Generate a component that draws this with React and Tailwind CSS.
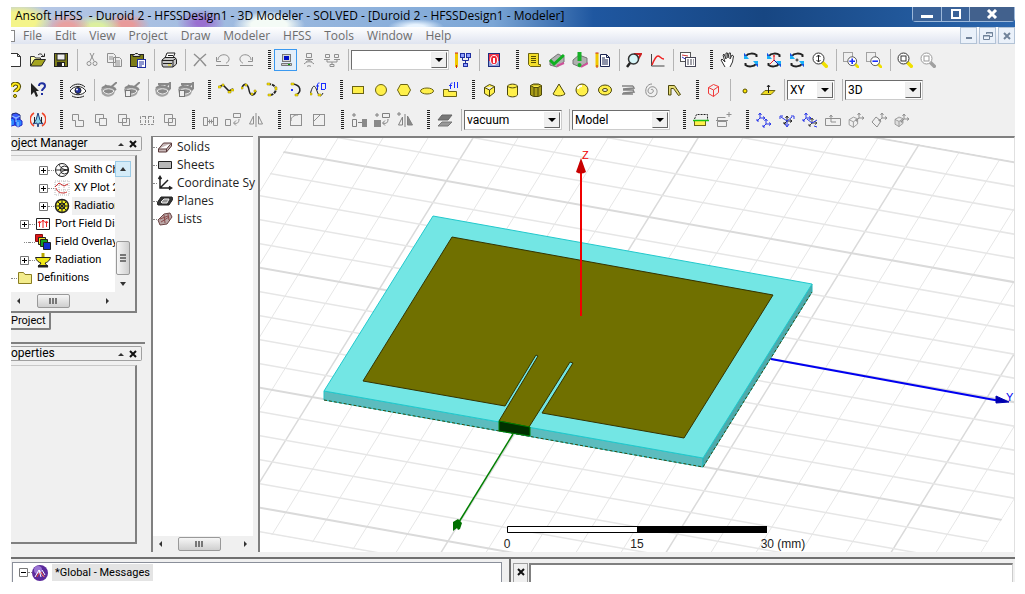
import React, { useState } from "react";

const GREY = "#8f8f8f";
const YELLOW = "#fff04a";
const BLUE = "#1a2fff";

const box = (x, y, w, h, fill, stroke) => (
  <rect x={x} y={y} width={w} height={h} fill={fill || "none"} stroke={stroke} />
);

const magnifier = (inner, stroke = "#333", handle = "#f0e000") => (
  <>
    <path d="M10 10L15.500 15.500" stroke={handle} strokeWidth="3.500" />
    <circle cx="6.500" cy="6.500" r="5.500" stroke={stroke} fill="#fff" />
    {inner}
  </>
);

const rotate = (inner) => (
  <>
    <path d="M3 4C5 1 11 1 13.500 3v2M13 12c-2 3-8 3-10.500 1v-2" stroke="#222" strokeWidth="2" />
    <path d="M1 1v6h5zM15 15V9h-5z" fill="#18b0f8" stroke="none" />
    <path d="M1 1v3h3zM15 15v-3h-3z" fill="#1a4fe0" stroke="none" />
    {inner}
  </>
);

const grayView = (extra) => (
  <>
    <path d="M0 7C3 3 11 2 15 6L13 12C9 16 4 15 1 12z" fill="#a3a3a3" stroke="none" />
    <path d="M4 3l4 4 8-7M1 6c4-3 10-2 14 2" stroke="#888" strokeWidth="2" />
    <path d="M2 9c3-3 8-3 11 0-3 4-8 4-11 0z" fill="#8a8a8a" stroke="#eee" />
    {extra}
  </>
);

const cube = (stroke, fill = "none") => (
  <path d="M2.500 5.500l5-3 5 2v6l-5 4-5-3zM2.500 5.500l5 2.500 5-3.500M7.500 8v6.500" stroke={stroke} fill={fill} />
);

const axes = (x, y, color) => (
  <path
    d={`M${x} ${y}v-5M${x - 1.5} ${y - 3}l1.5-2 1.500 2M${x} ${y}h5M${x + 3} ${y - 1.5}l2 1.500-2 1.500M${x} ${y}l-3 3M${x - 3} ${y + 1}v2h2`}
    stroke={color}
  />
);

const ICONS = {
  new: <path d="M2.500 1.500h8l3 3v10h-11zM10.500 1.500v3h3" fill="#fff" stroke="#333" />,
  open: (
    <>
      <path d="M.500 14V4.500h4l1 1.500h5V8" fill="#ffffb0" stroke="#333" />
      <path d="M.500 14l4-6.500h11l-4 6.500z" fill="#a5a520" stroke="#222" />
      <path d="M8 3c2-2 4-1 5 1M11 4.500h3.500V1.500" stroke="#222" />
    </>
  ),
  save: (
    <>
      {box(1.5, 1.5, 13, 13, "#7c7c18", "#222")}
      {box(4, 2, 8, 6, "#eee", "#222")}
      <path d="M4 10h8v4H4z" fill="#222" stroke="none" />
      <path d="M9 11h2v3H9z" fill="#fff" stroke="none" />
    </>
  ),
  cut: <path d="M6 1l4 8M10 1L6 9M7 11.500a2 2 0 1 1-4 0 2 2 0 0 1 4 0zM13 11.500a2 2 0 1 1-4 0 2 2 0 0 1 4 0z" stroke={GREY} />,
  copy: <path d="M.500 1.500h6l2 2v7h-8zM6.500 5.500h6l2 2v7h-8zM2 5h4M2 7h4M8 9h5M8 11h5M8 13h5" stroke={GREY} fill="#eee" />,
  paste: (
    <>
      {box(0.5, 2.5, 13, 12, "#7c7c18", "#222")}
      <path d="M3 4.500h7v-2H8.500l-1-1h-2l-1 1H3z" fill="#ddd" stroke="#222" />
      {box(7.5, 7.5, 8, 8, "#fff", "#1f2f9f")}
      <path d="M9 10h5M9 12h5M9 14h3" stroke="#1f2f9f" />
    </>
  ),
  print: (
    <>
      <path d="M4 6l2-5h8l-2 5" fill="#fff" stroke="#222" />
      <path d="M1 8l3-2.500h10l1.500 2V12L12 15H2l-1-2z" fill="#c8c8c8" stroke="#222" />
      <path d="M1 8.500h11l3-2M12 9v6M2 11.500h9M7 3.500h5" stroke="#222" />
      <path d="M7 13h3" stroke="#e8d800" />
    </>
  ),
  remove: <path d="M2 2c4 3 8 7 12 12M14 2C10 5 5 10 2 14" stroke={GREY} strokeWidth="1.500" />,
  undo: <path d="M3 8c0-7 12-7 11 0-1 2-2 3-3 3M1.500 5v4.500H6M1 13.500h13" stroke={GREY} />,
  redo: <path d="M13 8c0-7-12-7-11 0 1 2 2 3 3 3M14.500 5v4.500H10M2 13.500h13" stroke={GREY} />,
  local: (
    <>
      {box(4.5, 2.5, 8, 7, "#d8d8d8", "#777")}
      {box(6, 4, 5, 4, "#0010c8", "none")}
      <path d="M3.500 11.500h10v2h-10z" fill="#ccc" stroke="#777" />
      <path d="M10 12.500h2" stroke="#0a0" />
    </>
  ),
  remote: <path d="M5.500 1.500h5v4h-5zM4 7.500h8M5 10c2-2 4-2 6 0M3 12c3-3 7-3 10 0M6 14.500c1-1 3-1 4 0" stroke={GREY} />,
  distributed: <path d="M1.500 2.500h4v3h-4zM10.500 2.500h4v3h-4zM0 7.500h6M10 7.500h6M3 8v2h10V8M8 10v2M6 12.500h4v2H6z" stroke={GREY} />,
  analysisConfig: (
    <>
      <path d="M1.500 1v14" stroke="#f0c800" strokeWidth="3" />
      <path d="M0 1h3M1.500 13v3" stroke="#c22" />
      {box(5.5, 1.5, 4, 4, "#8f9fff", "#1f2f9f")}
      {box(11.5, 1.5, 4, 4, "#8f9fff", "#1f2f9f")}
      {box(8.5, 11.5, 4, 3, "#8f9fff", "#1f2f9f")}
      <path d="M7.500 6v2.500h6V6M10.500 9v2" stroke="#1f2f9f" />
    </>
  ),
  queue: (
    <>
      {box(2.5, 1.5, 11, 13, "#fff", "#1f2f7f")}
      <path d="M3 2h10v12H3z" fill="#f0384a" stroke="none" />
      <path d="M3 9h10v5H3z" fill="#8fa0d8" stroke="none" />
      <ellipse cx="8" cy="8" rx="3.500" ry="4.500" fill="#e23" stroke="#fff" />
      <path d="M8 6v5" stroke="#fff" strokeWidth="2" />
    </>
  ),
  list: (
    <>
      <path d="M2.500 1.500h10v11h2v2h-10l-2-2z" fill="#f4df2a" stroke="#6b6414" />
      <path d="M5 4.500h5M5 6.500h5M5 8.500h5M5 10.500h5" stroke="#554f00" />
    </>
  ),
  validate: (
    <>
      <path d="M1 8l8-6 6 3v5l-7 5-7-2z" fill="#b0b0b0" stroke="#777" />
      <path d="M8 14l7-3" stroke="#d0509a" strokeWidth="2" />
      <path d="M1 8l4 4 10-9" stroke="#10b020" strokeWidth="3" />
    </>
  ),
  analyze: (
    <>
      <path d="M1 8l6-5 8 3v5l-7 4-7-3z" fill="#b0b0b0" stroke="#777" />
      <path d="M9 15l7-4" stroke="#d0509a" strokeWidth="2" />
      <path d="M7.500 0v9" stroke="#18b028" strokeWidth="4" />
      <circle cx="7.500" cy="13" r="2" fill="#18b028" stroke="none" />
    </>
  ),
  notes: (
    <>
      <path d="M2 1v14" stroke="#f0c800" strokeWidth="3" />
      <path d="M.500 1h3M2 13v3" stroke="#c22" />
      <path d="M5.500 2.500h6l3 3v9h-9zM11.500 2.500v3h3M7 6h3M7 8h6M7 10h6M7 12h6" stroke="#1b2450" fill="#fff" />
    </>
  ),
  solutionData: (
    <>
      <path d="M8 2h7l-4 7" stroke="#c22" strokeWidth="2" />
      <circle cx="7.500" cy="7" r="5" fill="#d8f6f8" stroke="#333" strokeWidth="1.500" />
      <path d="M4 11l-3 4" stroke="#222" strokeWidth="2.500" />
    </>
  ),
  plot: (
    <>
      <path d="M2.500 2v12h13" stroke="#444" />
      <path d="M3 13C5 8 7 4 9 4s3 3 6 3" stroke="#e22" strokeWidth="1.500" />
    </>
  ),
  overlay: (
    <>
      {box(0.5, 0.5, 10, 9, "#fff", "#555")}
      <path d="M2 3l6 1" stroke="#c33" />
      <path d="M2 5l5 3" stroke="#33c" />
      {box(5.5, 5.5, 10, 9, "#fff", "#445")}
      <path d="M7 8h7M7 10h7M7 12h7" stroke="#445" strokeDasharray="2 1" />
    </>
  ),
  pan: <path d="M5 15L1 8l1-1 3 3-2-7 1-1 2 5V1h1.500L8 6l1-5h1.500L10 7l2-4 1.500 1-1 6-2.500 5" stroke="#333" fill="#fff" />,
  rotateCenter: rotate(null),
  rotateAxis: rotate(
    <>
      <path d="M8 3v5l-4 4M7 4h2" stroke="#e22" />
      <path d="M8 8l4 4" stroke="#11a" />
    </>
  ),
  rotateScreen: rotate(<path d="M8 6.500v3M6.500 8h3" stroke="#222" />),
  zoom: magnifier(<path d="M6.500 3v7M4.500 5l2-2 2 2M4.500 8l2 2 2-2" stroke="#222" />),
  zoomIn: (
    <>
      <path d="M.500.500h9v9h-9z" stroke="#555" strokeDasharray="1 1" />
      <g transform="translate(4 4) scale(.8)">{magnifier(<path d="M3 6.500h7M6.500 3v7" stroke={BLUE} strokeWidth="2" />)}</g>
    </>
  ),
  zoomOut: (
    <>
      <path d="M.500.500h9v9h-9z" stroke="#555" strokeDasharray="1 1" />
      <g transform="translate(4 4) scale(.8)">{magnifier(<path d="M3 6.500h7" stroke={BLUE} strokeWidth="2" />)}</g>
    </>
  ),
  fitAll: magnifier(box(4, 4, 5, 5, "none", "#333")),
  fitSelection: magnifier(box(4, 4, 5, 5, "none", "#999"), "#999", "#a0a0a0"),
  help: (
    <>
      <path d="M5 5c0-5 8-4 7 0 0 3-4 3-4 5" stroke="#554f00" strokeWidth="4" />
      <path d="M5 5c0-5 8-4 7 0 0 3-4 3-4 5" stroke="#ffe81a" strokeWidth="2" />
      <circle cx="8" cy="14" r="1.500" fill="#ffe81a" stroke="#554f00" />
    </>
  ),
  contextHelp: (
    <>
      <path d="M1 1v12l3-3 2 5 2-1-2-5h3z" fill="#222" stroke="none" />
      <path d="M9 4c0-4 6-3.500 6 0 0 2.500-3 2.500-3 5M12 11v2" stroke="#1f2f9f" strokeWidth="2" />
    </>
  ),
  eye: (
    <>
      <path d="M0 9c4-6 12-6 16 0-4 5-12 5-16 0z" fill="#fff" stroke="#222" />
      <path d="M0 6c4-5 11-5 15-1M2 14c4 2 8 2 12 0" stroke="#222" />
      <circle cx="8" cy="8.500" r="3" fill="#1f2f9f" stroke="#222" />
      <circle cx="7" cy="7.500" r="1" fill="#fff" stroke="none" />
    </>
  ),
  hideSelected: grayView(null),
  hideActive: grayView(box(1.5, 8.5, 5, 6, "#eee", "#777")),
  showSelected: grayView(<path d="M3 2h12v5" stroke="#888" strokeWidth="2" />),
  showActive: grayView(
    <>
      {box(1.5, 8.5, 5, 6, "#eee", "#777")}
      <path d="M3 2h12v5" stroke="#888" strokeWidth="2" />
    </>
  ),
  line: (
    <>
      <path d="M1 5l4-2 6 6 4-2" stroke="#222" strokeWidth="1.500" />
      <path d="M0 4h3v2H0zM4 2h2v2H4zM10 9h3v2h-3zM13 7h3v2h-3z" fill="#ffe600" stroke="#998a00" strokeWidth=".500" />
    </>
  ),
  spline: (
    <>
      <path d="M1 6c2-6 6-4 7 2s5 7 7 1" stroke="#222" strokeWidth="1.500" />
      <path d="M0 5h2v2H0zM4 2h2v2H4zM10 11h2v2h-2zM13 8h2v2h-2z" fill="#ffe600" stroke="#998a00" strokeWidth=".500" />
    </>
  ),
  arc3: (
    <>
      <path d="M4 2c6 0 10 4 7 8-1 2-3 3-5 3" stroke="#222" strokeWidth="2" strokeDasharray="3 1" />
      <path d="M3 1h3v2H3zM11 5h2v3h-2zM4 12h3v2H4z" fill="#ffe600" stroke="#998a00" strokeWidth=".500" />
    </>
  ),
  arcCenter: (
    <>
      <path d="M6 2c8 1 9 8 3 11" stroke="#222" strokeWidth="1.500" />
      <path d="M4 1h3v2H4zM8 12h3v2H8z" fill="#ffe600" stroke="#998a00" strokeWidth=".500" />
      <path d="M4 8h2" stroke={BLUE} strokeWidth="2" />
    </>
  ),
  equationCurve: (
    <>
      <path d="M0 13C3 1 5 3 7 9s4 6 6 2" stroke="#222" />
      <path d="M0 11h2v2H0zM8 12h3v2H8z" fill="#ffe600" stroke="#998a00" strokeWidth=".500" />
      <path d="M7.500 8V3c0-2 1-2 2-2M6 4h3M11.500 1v6M15.500 1v6M11 1.500h4M11 7.500h4" stroke={BLUE} />
    </>
  ),
  rectangle: box(2.5, 4.5, 11, 7, YELLOW, "#6b6414"),
  circle: <circle cx="8" cy="8" r="5.500" fill={YELLOW} stroke="#6b6414" />,
  polygon: <path d="M1.500 8l3-5.500h7l3 5.500-3 5.500h-7z" fill={YELLOW} stroke="#6b6414" />,
  ellipse: <ellipse cx="8" cy="9" rx="6.500" ry="3" fill={YELLOW} stroke="#6b6414" />,
  equationSurface: (
    <>
      <path d="M1.500 14.500v-7h5v2h8v5z" fill={YELLOW} stroke="#6b6414" />
      <path d="M8.500 7V3c0-2 1-2 2-2M7 3.500h3M12.500 0v6M15.500 0v6" stroke={BLUE} />
    </>
  ),
  box: cube("#4d480c", YELLOW),
  cylinder: <path d="M2.500 4v9c2 2.500 8 2.500 10 0V4c-2-2.500-8-2.500-10 0zM2.500 4c2 2.500 8 2.500 10 0" fill={YELLOW} stroke="#4d480c" />,
  prism: (
    <>
      <path d="M2.500 3.500l3-1.500h5l3 1.500v9.500l-3 1.500h-5L2.500 13z" fill="#a89c18" stroke="#4d480c" />
      <path d="M2.500 3.500L6 5.500h4l3.500-2M6 5.500v9M10 5.500v9" fill={YELLOW} stroke="#4d480c" />
    </>
  ),
  cone: <path d="M8 2l6 10c-3 2.500-9 2.500-12 0z" fill={YELLOW} stroke="#4d480c" />,
  sphere: (
    <>
      <circle cx="8" cy="8" r="6" fill={YELLOW} stroke="#4d480c" />
      <path d="M4 7c0-2 2-3 4-3" stroke="#fff" strokeWidth="2" />
    </>
  ),
  torus: (
    <>
      <ellipse cx="8" cy="8" rx="6.500" ry="5" fill={YELLOW} stroke="#4d480c" />
      <ellipse cx="8" cy="8" rx="2.500" ry="1.500" fill="#f0f0f0" stroke="#4d480c" />
    </>
  ),
  helix: <path d="M2 4h11M3 8h11M2 12h11M13 4l1 2-11 1M13 8l1 2-11 1" stroke="#858585" strokeWidth="1.500" />,
  spiral: <path d="M8 8c1-2 3 0 2 2s-5 2-5-1 3-5 6-4 4 5 2 8-9 2-10-2S4 2 9 2" stroke={GREY} />,
  bondwire: <path d="M2.500 13V3.500h6l6 9-2 1-5-7H5V13z" fill="#e6dc78" stroke="#4d480c" />,
  region: cube("#f03a3a"),
  point: <circle cx="8" cy="9" r="2" fill="#ffe600" stroke="#554f00" />,
  plane: (
    <>
      <path d="M1 12.500l4-4h10l-4 4z" fill="#f0dc20" stroke="#6b6414" />
      <path d="M8.500 11V3M7 5l1.500-2L10 5" stroke="#222" />
    </>
  ),
  cubes: (
    <>
      <path d="M5 2l4-1 4 2v5l-4 2-4-2z" fill="#3b5bff" stroke="#16206f" />
      <path d="M1 7l4-1 3 2v5l-4 1-3-2zM8 8l4-1 3 2v4l-4 2-3-2z" fill="#2b86ff" stroke="#2222c8" />
      <path d="M5 4l4 2 4-2M9 6v4M4 9v5M11 10v5" stroke="#9fd0ff" />
    </>
  ),
  plane3d: (
    <>
      <path d="M4 1C-1 4-1 11 4 14M12 1c5 3 5 10 0 13" stroke="#f0452a" strokeWidth="1.500" />
      <path d="M8 1l2 7 3 4-4-1-1 4-1-4-4 1 3-4z" fill="#8ad4e8" stroke="#1f3f7f" />
      <path d="M4.500 5v6M11.500 5v6" stroke="#222" />
    </>
  ),
  unite: <path d="M2.500 2.500h6v6h5v6h-8v-6h-3z" stroke={GREY} />,
  subtract: <path d="M10.500 6V2.500h-8v8H6M6.500 6.500h7v7h-7z" stroke={GREY} />,
  intersect: <path d="M2.500 2.500h8v8h-8zM6.500 6.500h7v7h-7z" stroke={GREY} />,
  split: <path d="M6 4.500H1.500v8H6M10 4.500h4.500v8H10M6.500 4v9M9.500 4v9" stroke={GREY} strokeDasharray="3 1" />,
  imprint: <path d="M2.500 2.500h8v8h-8zM6.500 6.500h7v7h-7z" stroke={GREY} />,
  move: <path d="M1.500 5.500h4v8h-4zM11.500 5.500h4v8h-4zM6 9.500h5M7.500 7.500v4M9.500 7.500v4" stroke={GREY} />,
  rotate: <path d="M.500 7.500h5v6h-5zM8.500 1.500h7v4h-7zM14 7c0 4-2 5-5 4M11 8.500L8.500 11l2.500 2.500" stroke={GREY} />,
  mirror: <path d="M5.500 4v8h-4zM8 1v14M10.500 4v8h4z" stroke={GREY} />,
  fillet: (
    <>
      {box(2.5, 2.5, 11, 11, "none", GREY)}
      <path d="M3 9c0-4 3-6 7-6" stroke={GREY} />
    </>
  ),
  chamfer: (
    <>
      {box(2.5, 2.5, 11, 11, "none", GREY)}
      <path d="M3 9l6-6" stroke={GREY} />
    </>
  ),
  dupLine: (
    <>
      <path d="M3 1v4M1 3h4M1.500 7.500h4v7h-4zM7 10.500h4" stroke="#808080" />
      {box(11, 7, 5, 8, "#8a8a8a", "none")}
    </>
  ),
  dupAxis: (
    <>
      <path d="M3 1v4M1 3h4M8.500 1.500h7v4h-7zM14 7c0 4-2 5-5 4M11 8.500L8.500 11l2.500 2.500" stroke="#808080" />
      {box(0, 8, 7, 7, "#8a8a8a", "none")}
    </>
  ),
  dupMirror: (
    <>
      <path d="M2 0v4M0 2h4M5.500 5v8h-4zM8 2v13" stroke="#808080" />
      <path d="M10.500 4v9h5z" fill="#8a8a8a" stroke="#808080" />
    </>
  ),
  sheets: (
    <>
      <path d="M1 8l4-5h10l-4 5z" fill="#777" stroke="#666" />
      <path d="M1 14l4-4h10l-4 4z" fill="#999" stroke="#777" />
    </>
  ),
  section: (
    <>
      <path d="M1.500 7l2-4.500h11V8" stroke="#222" strokeDasharray="2 1" />
      {box(1.5, 8.5, 11, 5, YELLOW, "#6b6414")}
      <path d="M0 8.500h16" stroke="#18c018" strokeWidth="1.500" />
    </>
  ),
  sectionAdd: <path d="M1.500 9V5.500h8M1.500 9.500h9v5h-9zM0 8.500h12M13 0v5M10.500 2.500h5" stroke={GREY} />,
  relativeCS: <>{axes(4, 6, "#2937e8")}{axes(10, 12, "#2937e8")}</>,
  rotatedCS: <>{axes(8, 9, "#222")}<path d="M2 5l6 4M13 5L8 9v5M1 7V4h3M12 4h3v3M6 12l2 3 2-3" stroke="#2937e8" /></>,
  bothCS: <>{axes(4, 6, "#2937e8")}{axes(10, 11, "#444")}<path d="M5 7l5 4 5-3M12 14l3 1" stroke="#2937e8" /></>,
  faceCS: <path d="M.500 6.500h15v7H.500zM6 10V3M4.500 5L6 3l1.500 2M6 10h5" stroke={GREY} />,
  objectCS: <><g transform="translate(-1 3) scale(.85)">{cube(GREY)}</g>{axes(11, 6, GREY)}</>,
  objectCSOffset: <><path d="M1 10l4-5 5 4-4 6z" stroke={GREY} />{axes(11, 6, GREY)}</>,
  objectCSBoth: <><g transform="translate(-1 3) scale(.8)">{cube(GREY, "#ddd")}</g>{axes(10, 7, GREY)}</>,
};

function Icon({ name }) {
  return (
    <svg viewBox="0 0 16 16" className="size-4 shrink-0" fill="none" stroke="#222" aria-hidden="true">
      {ICONS[name]}
    </svg>
  );
}

// "|" is a separator, ":" is a drag handle, objects are drop-downs
const TOOLBARS = [
  [
    "new", "open", "save", "|", "cut", "copy", "paste", "|", "print", "|", "remove", "undo", "redo", ":",
    "local", "remote", "distributed", "|", { label: "Analysis setup", options: [""], width: "w-[98px]" },
    "analysisConfig", "|", "queue", ":", "list", "validate", "analyze", "notes", "|", "solutionData", "plot",
    "|", "overlay", ":", "pan", "rotateCenter", "rotateAxis", "rotateScreen", "zoom", "|", "zoomIn", "zoomOut",
    "|", "fitAll", "fitSelection",
  ],
  [
    "help", "contextHelp", ":", "eye", "|", "hideSelected", "hideActive", "|", "showSelected", "showActive", ":",
    "line", "spline", "arc3", "arcCenter", "equationCurve", ":", "rectangle", "circle", "polygon", "ellipse",
    "equationSurface", ":", "box", "cylinder", "prism", "cone", "sphere", "torus", "helix", "spiral", "bondwire",
    ":", "region", "|", "point", "plane", "|",
    { label: "Drawing plane", options: ["XY", "YZ", "XZ"], width: "w-[48px]" }, "|",
    { label: "Movement mode", options: ["3D", "In Plane", "Out of Plane"], width: "w-[78px]" },
  ],
  [
    "cubes", "plane3d", ":", "unite", "subtract", "intersect", "split", "imprint", ":", "move", "rotate", "mirror",
    ":", "fillet", "chamfer", ":", "dupLine", "dupAxis", "dupMirror", ":", "sheets", "|",
    { label: "Material", options: ["vacuum", "copper"], width: "w-[98px]" }, "|",
    { label: "Object type", options: ["Model", "Non Model"], width: "w-[98px]" }, ":", "section", "sectionAdd", ":",
    "relativeCS", "rotatedCS", "bothCS", "faceCS", "objectCS", "objectCSOffset", "objectCSBoth",
  ],
];

function ToolSelect({ label, options, width }) {
  return (
    <div className={`relative mr-0.5 h-5 shrink-0 border border-[#6d6d6d] border-r-[#ccc] border-b-[#ccc] bg-white ${width}`}>
      <select
        aria-label={label}
        className="block h-full w-full appearance-none bg-transparent pl-0.5 font-['Roboto',sans-serif] text-[12px] leading-4 text-black outline-none"
      >
        {options.map((o) => (
          <option key={o}>{o}</option>
        ))}
      </select>
      <span className="pointer-events-none absolute inset-y-px right-px flex w-4 items-center justify-center border border-[#eee] border-r-[#666] border-b-[#666] bg-[#f0f0f0]">
        <svg viewBox="0 0 8 4" className="h-1 w-2">
          <path d="M0 0h8L4 4z" />
        </svg>
      </span>
    </div>
  );
}

function Toolbar({ items }) {
  const [active, setActive] = useState("local");

  return (
    <div className="-ml-2 flex h-[30px] items-center">
      {items.map((item, i) => {
        if (item === "|") return <span key={i} className="mr-0.5 ml-[5px] h-[22px] w-px shrink-0 bg-[#b4b4b4]" />;
        if (item === ":") {
          return (
            <span
              key={i}
              className="mr-[3px] ml-[11px] h-5 w-[3px] shrink-0 bg-[repeating-linear-gradient(#222_0_1px,#f0f0f0_1px_2px)]"
            />
          );
        }
        if (item.options) return <ToolSelect key={i} {...item} />;
        return (
          <button
            key={i}
            aria-label={item}
            onClick={() => setActive(item)}
            className={`flex h-[22px] w-[23px] shrink-0 items-center justify-center ${
              active === item ? "border border-[#3b99f0] bg-[#e3eefa]" : ""
            }`}
          >
            <Icon name={item} />
          </button>
        );
      })}
    </div>
  );
}

const MENUS = ["File", "Edit", "View", "Project", "Draw", "Modeler", "HFSS", "Tools", "Window", "Help"];

function TitleBar() {
  return (
    <header className="flex h-5 shrink-0 items-start justify-between overflow-hidden bg-[radial-gradient(ellipse_34px_18px_at_8px_14px,#f4f48a_50%,transparent),radial-gradient(ellipse_24px_14px_at_56px_20px,#e8a0a0_30%,transparent),radial-gradient(ellipse_26px_12px_at_85px_20px,#dcefa0_30%,transparent),radial-gradient(ellipse_24px_12px_at_115px_18px,#e89a9a_30%,transparent),radial-gradient(ellipse_24px_14px_at_190px_16px,#9a6fd0_20%,transparent),radial-gradient(ellipse_36px_14px_at_258px_18px,#f4fbf6_50%,transparent),radial-gradient(ellipse_28px_8px_at_405px_20px,#e8f4ff_30%,transparent),linear-gradient(to_right,#b9c9e6,#8fb2dc_35%,#7ba6d6_48%,#1f57a0_58%,#174682_75%,#2a66ae)] pl-1">
      <h1 className="pt-px text-[12px] leading-4 whitespace-pre text-black">
        Ansoft HFSS  - Duroid 2 - HFSSDesign1 - 3D Modeler - SOLVED - [Duroid 2 - HFSSDesign1 - Modeler]
      </h1>
      <div className="flex h-[15px] shrink-0 rounded-b border border-t-0 border-[#9cb8da] text-white">
        <button aria-label="Minimize" className="flex w-[29px] items-end justify-center border-r border-[#9cb8da] bg-[#3a6298] pb-[3px]">
          <span className="h-[3px] w-3 bg-white" />
        </button>
        <button aria-label="Restore" className="flex w-7 items-center justify-center border-r border-[#9cb8da] bg-[#3a6298]">
          <span className="size-[10px] border-2 border-white bg-[#3a6298]" />
        </button>
        <button aria-label="Close" className="flex w-[44px] items-center justify-center bg-[#42618d]">
          <svg viewBox="0 0 12 10" className="h-[10px] w-3" stroke="#fff" strokeWidth="3">
            <path d="M2 1l8 8M10 1L2 9" />
          </svg>
        </button>
      </div>
    </header>
  );
}

function MenuBar() {
  return (
    <nav className="flex h-[17px] shrink-0 items-stretch overflow-hidden bg-linear-to-b from-white to-[#dfe4f0]">
      <span className="mt-[3px] mr-2 h-3 w-1 border border-l-0 border-[#888] bg-white" />
      <div className="flex gap-[13px] text-[12px] leading-4 text-[#6d6d6d]">
        {MENUS.map((m) => (
          <button key={m}>{m}</button>
        ))}
      </div>
      <div className="ml-auto flex gap-0.5">
        <button aria-label="Minimize document" className="flex w-[17px] items-end justify-center border border-[#b3c3d6] bg-[#eaf1fa] pb-1">
          <span className="h-0.5 w-1.5 bg-[#71839a]" />
        </button>
        <button aria-label="Restore document" className="flex w-[17px] items-center justify-center border border-[#b3c3d6] bg-[#eaf1fa]">
          <svg viewBox="0 0 10 10" className="size-[10px]" fill="none" stroke="#71839a">
            <path d="M3.500 3V1.500h6v4H7M3 2h7M.500 4.500h6v4h-6zM0 5h7" />
          </svg>
        </button>
        <button aria-label="Close document" className="flex w-[17px] items-center justify-center border border-[#b3c3d6] bg-[#eaf1fa]">
          <svg viewBox="0 0 8 8" className="size-2" stroke="#71839a" strokeWidth="2">
            <path d="M1 1l6 6M7 1L1 7" />
          </svg>
        </button>
      </div>
    </nav>
  );
}

const Arrow = ({ d }) => (
  <svg viewBox="0 0 8 8" className="size-2 shrink-0" fill="#333">
    <path d={d} />
  </svg>
);

function HScroll({ thumb }) {
  return (
    <div className="flex h-4 shrink-0 items-center justify-between bg-[#f0f0f0] px-1">
      <Arrow d="M5 1v6L2 4z" />
      <span className={`flex h-[14px] items-center justify-center gap-px rounded-xs border border-[#999] bg-linear-to-b from-[#f6f6f6] to-[#cfcfcf] ${thumb}`}>
        <i className="h-1.5 w-0.5 bg-[#777]" />
        <i className="h-1.5 w-0.5 bg-[#777]" />
        <i className="h-1.5 w-0.5 bg-[#777]" />
      </span>
      <Arrow d="M3 1v6l3-3z" />
    </div>
  );
}

function DockTitle({ children }) {
  return (
    <div className="mr-[3px] flex h-[15px] shrink-0 items-start rounded-r-xs border border-l-0 border-[#a0a0a0]">
      <h2 className="font-['Roboto',sans-serif] text-[12px] leading-3 text-black">{children}</h2>
      <button aria-label="Collapse" className="mt-[3px] mr-1 ml-auto">
        <Arrow d="M1 6h6L4 3z" />
      </button>
      <button aria-label="Close panel" className="mt-[3px] mr-1">
        <svg viewBox="0 0 8 8" className="size-2" stroke="#111" strokeWidth="2">
          <path d="M1 1l6 6M7 1L1 7" />
        </svg>
      </button>
    </div>
  );
}

const Expander = ({ sign = "+" }) => (
  <svg viewBox="0 0 9 9" className="size-[9px] shrink-0" fill="#fff" stroke="#777">
    <path d="M.500.500h8v8h-8z" />
    <path d={sign === "+" ? "M2 4.500h5M4.500 2v5" : "M2 4.500h5"} stroke="#000" />
  </svg>
);

const TREE_ICONS = {
  smith: (
    <>
      <circle cx="8" cy="8" r="6.500" fill="#fff" />
      <path d="M2 8h12M5 2c1 4 5 6 9 6-4 0-8 2-9 6" />
      <circle cx="10.500" cy="8" r="4" />
    </>
  ),
  xy: (
    <>
      <path d="M1 1h14v14H1zM5 1v14M10 1v14M1 5h14M1 10h14" stroke="#bbb" strokeDasharray="1 1" />
      <path d="M1 7l4-4 5 3 4-2M2 8c1 5 7 6 11 4" stroke="#c33" />
    </>
  ),
  pattern: (
    <>
      <circle cx="8" cy="8" r="6.500" fill="#f2ef20" strokeWidth="1.500" />
      <circle cx="8" cy="8" r="3" />
      <path d="M8 1v14M1 8h14M3 3l10 10M13 3L3 13" />
    </>
  ),
  port: (
    <>
      <path d="M1.500 2.500h13v11h-13z" fill="#fff" />
      <path d="M4.500 11V6M8 12V4M11.500 11V6M3 7l1.500-2L6 7M6.500 6L8 4l1.500 2M10 7l1.500-2L13 7" stroke="#e22" />
    </>
  ),
  overlays: (
    <>
      <path d="M.500.500h7v7h-7z" fill="#e01818" stroke="#801010" />
      <path d="M3.500 3.500h7v7h-7z" fill="#e8e020" />
      <path d="M5.500 5.500h7v7h-7z" fill="#10a020" />
      <path d="M8.500 8.500h7v7h-7z" fill="#1030d0" />
    </>
  ),
  radiation: (
    <>
      <path d="M.500 5.500h15c-1 4-4 5-5.500 5.500l3 4H3l3-4C4 10.500 1.500 9 .500 5.500z" fill="#f0e818" />
      <path d="M3 14h10" strokeWidth="2" />
      <path d="M8 1v4" stroke="#b8a800" strokeWidth="3" />
    </>
  ),
  folder: <path d="M1.500 13.500v-11h5l1.500 2h6.500v9z" fill="#f3ec8c" stroke="#8a7d20" />,
};

const PROJECT_TREE = [
  { label: "Smith Ch", icon: "smith", pad: "pl-7", open: true },
  { label: "XY Plot 2", icon: "xy", pad: "pl-7", open: true },
  { label: "Radiation", icon: "pattern", pad: "pl-7", open: true, selected: true },
  { label: "Port Field Dis", icon: "port", pad: "pl-[9px]", open: true },
  { label: "Field Overlay", icon: "overlays", pad: "pl-[9px]" },
  { label: "Radiation", icon: "radiation", pad: "pl-[9px]", open: true },
  { label: "Definitions", icon: "folder", pad: "pl-0", root: true },
];

function ProjectManager() {
  return (
    <section className="flex flex-col">
      <DockTitle>oject Manager</DockTitle>
      <div className="mt-1 mr-2 border-t border-r-2 border-b-2 border-[#808080] border-t-[#c8c8c8] pt-[5px] pr-1 pb-0.5">
        <div className="flex bg-white">
          <ul className="min-w-0 flex-1 overflow-hidden pb-[5px] font-['Roboto',sans-serif] text-[11px] leading-[18px] text-black">
            {PROJECT_TREE.map((n) => (
              <li key={n.icon} className={`flex h-[18px] items-center whitespace-nowrap ${n.pad}`}>
                {n.open && <Expander />}
                {!n.open && !n.root && <span className="ml-1 w-[5px] shrink-0 border-t border-dotted border-[#888]" />}
                <span className="w-[6px] shrink-0 border-t border-dotted border-[#888]" />
                <svg viewBox="0 0 16 16" className="size-4 shrink-0" fill="none" stroke="#222" aria-hidden="true">
                  {TREE_ICONS[n.icon]}
                </svg>
                <span className={`ml-0.5 px-0.5 ${n.selected ? "bg-[#f0f0f0]" : ""}`}>{n.label}</span>
              </li>
            ))}
          </ul>
          <div className="flex w-4 shrink-0 flex-col items-center bg-[#f0f0f0]">
            <button aria-label="Scroll up" className="flex size-4 items-center justify-center border border-[#9ccbe6] bg-[#d5ecf8]">
              <Arrow d="M1 6h6L4 2z" />
            </button>
            <span className="mt-auto flex h-[34px] w-[14px] flex-col items-center justify-center gap-px rounded-xs border border-[#999] bg-linear-to-r from-[#f6f6f6] to-[#cfcfcf]">
              <i className="h-0.5 w-1.5 bg-[#777]" />
              <i className="h-0.5 w-1.5 bg-[#777]" />
              <i className="h-0.5 w-1.5 bg-[#777]" />
            </span>
            <button aria-label="Scroll down" className="mt-px flex size-4 items-center justify-center">
              <Arrow d="M1 2h6L4 6z" />
            </button>
          </div>
        </div>
        <div className="bg-[#f0f0f0] pt-px pr-4">
          <HScroll thumb="-ml-5 w-[33px]" />
        </div>
      </div>
      <button className="h-[17px] w-10 rounded-br-xs border-r-2 border-b-2 border-[#808080] text-left font-['Roboto',sans-serif] text-[11px] leading-4 text-black">
        Project
      </button>
    </section>
  );
}

const MODEL_TREE = [
  {
    label: "Solids",
    icon: <path d="M1.500 10l5-6h8l-5 6zM1.500 10v3h8l5-6V4M9.500 10v3" fill="#c9b8b8" stroke="#5a3a3a" />,
  },
  { label: "Sheets", icon: <path d="M1.500 4.500h13v7h-13z" fill="#b8b8b8" /> },
  {
    label: "Coordinate Sy",
    icon: <path d="M3 2v11h11M3 13l8-8M1.500 4L3 1.500 4.500 4M12 11.500l2.500 1.500-2.500 1.500" strokeWidth="1.500" />,
  },
  {
    label: "Planes",
    icon: (
      <>
        <path d="M0 10l4-6h11l1 2-4 6H1z" fill="#333" />
        <path d="M4 9l3-3h5l-2 4H5z" fill="#999" stroke="#eee" />
      </>
    ),
  },
  {
    label: "Lists",
    icon: (
      <>
        <path d="M1 9l6-6 6-1 2 4-5 7-7 1z" fill="#b9a5a5" stroke="#6a4444" />
        <path d="M3 8l8-3M4 11l8-5M7 4l1 8M11 3l1 6" stroke="#8a4a4a" />
      </>
    ),
  },
];

function ModelTree() {
  return (
    <section className="flex w-[102px] shrink-0 flex-col border-t border-l-2 border-[#808080] bg-white">
      <ul className="flex-1 pt-px">
        {MODEL_TREE.map((n) => (
          <li key={n.label} className="flex h-[18px] items-center whitespace-nowrap">
            <span className="w-1 shrink-0 border-t border-dotted border-[#888]" />
            <svg viewBox="0 0 16 16" className="size-4 shrink-0" fill="none" stroke="#222" aria-hidden="true">
              {n.icon}
            </svg>
            <span className="ml-1 font-['Open_Sans',sans-serif] text-[12px] leading-4 text-[#222]">{n.label}</span>
          </li>
        ))}
      </ul>
      <HScroll thumb="-ml-2 w-[43px]" />
    </section>
  );
}

// One grid step is 45 units across and 24 units down; every fifth line is heavier.
const STEEP = Array.from({ length: 22 }, (_, i) => ({ x: 293 + i * 45, major: i % 5 === 4 }));
const SHALLOW = Array.from({ length: 22 }, (_, i) => ({ y: 28 + i * 24, major: i % 5 === 0 }));

function ModelView() {
  return (
    <section className="min-w-0 flex-1 border-t-2 border-r border-l-2 border-[#808080] border-r-[#e0e0e0] bg-white">
      <svg viewBox="260 138 754 414" preserveAspectRatio="xMinYMin slice" className="block h-full w-full" fill="none">
        <clipPath id="grid">
          <path d="M351 43L1203 195L921 650L68 499Z" />
        </clipPath>
        <g clipPath="url(#grid)">
          {STEEP.map((l) => (
            <path
              key={l.x}
              d={`M${l.x + 62} 38L${l.x - 310} 638`}
              stroke={l.major ? "#dadada" : "#e6e6e6"}
              strokeWidth={l.major ? 1.5 : 1}
            />
          ))}
          {SHALLOW.map((l) => (
            <path
              key={l.y}
              d={`M60 ${l.y - 36}L1260 ${l.y + 178}`}
              stroke={l.major ? "#dadada" : "#e6e6e6"}
              strokeWidth={l.major ? 2 : 1.5}
            />
          ))}
        </g>

        {/* substrate */}
        <path d="M324 391L703 458V467L324 400Z" fill="#5cbcbe" stroke="#22c4c8" />
        <path d="M703 458L812 284V292L703 467Z" fill="#4fa9ab" stroke="#22b4b8" />
        <path d="M324 400L703 467L812 292" stroke="#3a4a10" strokeDasharray="3 2" />
        <path d="M433 216L812 284L703 458L324 391Z" fill="#73e6e4" stroke="#22c8cc" />

        {/* patch with inset feed */}
        <path
          d="M452 237L773 295L684 438L542 413L573 363L570 362L529 427L499 421L538 356L536 355L505 406L363 381Z"
          fill="#707000"
          stroke="#333300"
        />
        <path d="M499 421L530 427V436L499 431Z" fill="#003000" stroke="#008000" />

        {/* axes */}
        <path d="M581 316V170" stroke="#f00000" strokeWidth="2" />
        <path d="M581 158L576 172Q581 175 586 172Z" fill="#c80000" />
        <path d="M771 359L1000 401" stroke="#0000f0" strokeWidth="2" />
        <path d="M1009 402L996 396V403Z" fill="#0000b0" stroke="#0000b0" />
        <path d="M513 434L459 522" stroke="#008000" strokeWidth="1.500" />
        <path d="M453 522L458 519L462 523L460 529L458 530L457 528L453 531Z" fill="#007000" />
        <g fontFamily="Liberation Sans, sans-serif" fontSize="11">
          <text x="582" y="159" fill="#f00000">Z</text>
          <text x="1006" y="401" fill="#0000f0">Y</text>
        </g>

        {/* scale */}
        <path d="M507.500 526.500h259v6h-259z" fill="#fff" stroke="#000" />
        <path d="M637 526h130v7H637z" fill="#000" />
        <g fontFamily="Liberation Sans, sans-serif" fontSize="12" fill="#222" textAnchor="middle">
          <text x="507" y="548">0</text>
          <text x="637" y="548">15</text>
          <text x="783" y="548">30 (mm)</text>
        </g>
      </svg>
    </section>
  );
}

function MessageBar() {
  return (
    <footer className="mt-[5px] flex h-[25px] shrink-0 border-t-2 border-[#707070]">
      <div className="mt-[3px] ml-px flex flex-[488] items-center gap-1 border border-b-0 border-[#8a8f9a] bg-white pl-1.5">
        <Expander sign="-" />
        <span className="-mx-1 w-1 border-t border-dotted border-[#888]" />
        <svg viewBox="0 0 16 16" className="size-4 shrink-0" aria-hidden="true">
          <circle cx="8" cy="8" r="8" fill="#5b2a9c" />
          <circle cx="6" cy="5" r="4" fill="#9a74d4" />
          <path d="M3 12L7 5l2 7M7 5l5 7M10 5l3 5" fill="none" stroke="#fff" />
          <path d="M5 12l2-4M9 7l3 5" stroke="#e04030" />
        </svg>
        <span className="bg-[#e4e4e4] px-[3px] font-['Roboto',sans-serif] text-[11px] leading-[17px] text-black">
          *Global - Messages
        </span>
      </div>
      <div className="ml-[7px] w-0.5 bg-[#707070]" />
      <div className="mt-1 ml-0.5 flex w-[15px] flex-col items-center gap-2 overflow-hidden border border-b-0 border-[#a0a0a0] pt-1">
        <button aria-label="Close messages">
          <svg viewBox="0 0 8 8" className="block size-2" stroke="#111" strokeWidth="2">
            <path d="M1 1l6 6M7 1L1 7" />
          </svg>
        </button>
        <Arrow d="M1 4h6L4 1z" />
      </div>
      <div className="mt-1 mr-0.5 ml-px flex-[487] border-t-2 border-r border-l-2 border-[#808080] border-r-[#ccc] bg-white" />
    </footer>
  );
}

export default function App() {
  return (
    <div className="h-screen bg-white pt-[7px] pr-[10px] pb-3 pl-[11px] font-['Liberation_Sans',Arial,sans-serif]">
      <div className="flex h-full flex-col overflow-hidden bg-[#f0f0f0]">
        <div className="font-['Open_Sans',sans-serif]">
          <TitleBar />
          <MenuBar />
        </div>
        <div className="shrink-0 overflow-hidden pt-px">
          {TOOLBARS.map((items, i) => (
            <Toolbar key={i} items={items} />
          ))}
        </div>
        <main className="flex min-h-0 flex-1 pt-px">
          <aside className="flex w-[134px] shrink-0 flex-col">
            <ProjectManager />
            <section className="mt-3 flex min-h-0 flex-1 flex-col border-t-2 border-[#808080] pt-0.5">
              <DockTitle>operties</DockTitle>
              <div className="mt-1 mr-2 mb-2 flex-1 border-t border-r-2 border-b-2 border-[#808080] border-t-[#c8c8c8]" />
            </section>
          </aside>
          <div className="w-1.5 shrink-0" />
          <ModelTree />
          <div className="w-[5px] shrink-0" />
          <ModelView />
        </main>
        <MessageBar />
      </div>
    </div>
  );
}
